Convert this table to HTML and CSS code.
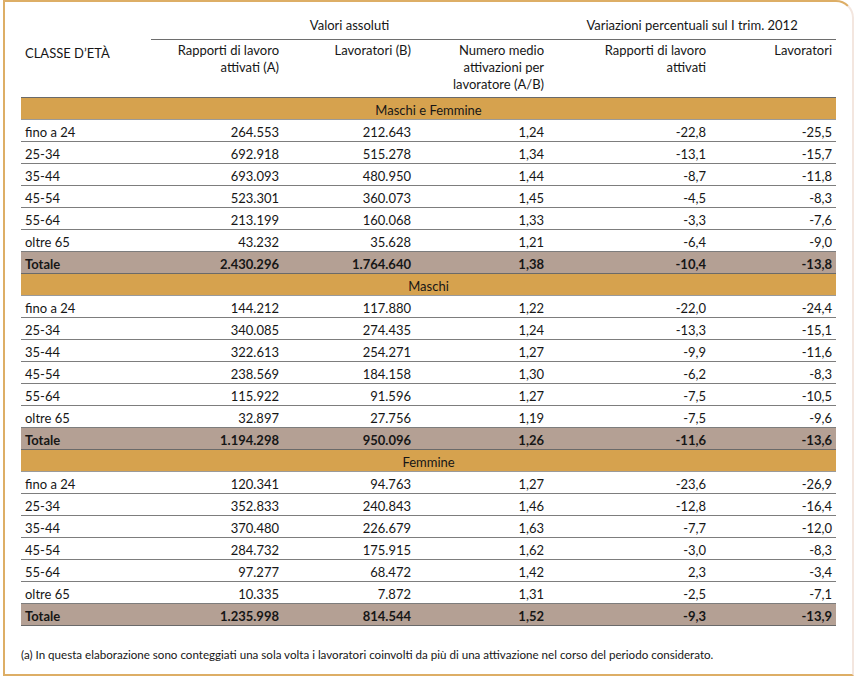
FILE: index.html
```html
<!DOCTYPE html>
<html lang="it">
<head>
<meta charset="utf-8">
<link rel="stylesheet" href="styles.css">
</head>
<body>
<div class="frame">
<table class="data">
<colgroup>
<col class="c1"><col class="c2"><col class="c3"><col class="c4"><col class="c5"><col class="c6">
</colgroup>
<thead>
<tr class="grp">
<th rowspan="2" class="age">CLASSE D’ETÀ</th>
<th colspan="3" class="g">Valori assoluti</th>
<th colspan="2" class="g">Variazioni percentuali sul I trim. 2012</th>
</tr>
<tr class="sub">
<th>Rapporti di lavoro<br>attivati (A)</th>
<th>Lavoratori (B)</th>
<th>Numero medio<br>attivazioni per<br>lavoratore (A/B)</th>
<th>Rapporti di lavoro<br>attivati</th>
<th>Lavoratori</th>
</tr>
</thead>
<tbody>
<tr class="band"><td colspan="6">Maschi e Femmine</td></tr>
<tr><td>fino a 24</td><td>264.553</td><td>212.643</td><td>1,24</td><td>-22,8</td><td>-25,5</td></tr>
<tr><td>25-34</td><td>692.918</td><td>515.278</td><td>1,34</td><td>-13,1</td><td>-15,7</td></tr>
<tr><td>35-44</td><td>693.093</td><td>480.950</td><td>1,44</td><td>-8,7</td><td>-11,8</td></tr>
<tr><td>45-54</td><td>523.301</td><td>360.073</td><td>1,45</td><td>-4,5</td><td>-8,3</td></tr>
<tr><td>55-64</td><td>213.199</td><td>160.068</td><td>1,33</td><td>-3,3</td><td>-7,6</td></tr>
<tr><td>oltre 65</td><td>43.232</td><td>35.628</td><td>1,21</td><td>-6,4</td><td>-9,0</td></tr>
<tr class="tot"><td>Totale</td><td>2.430.296</td><td>1.764.640</td><td>1,38</td><td>-10,4</td><td>-13,8</td></tr>
<tr class="band"><td colspan="6">Maschi</td></tr>
<tr><td>fino a 24</td><td>144.212</td><td>117.880</td><td>1,22</td><td>-22,0</td><td>-24,4</td></tr>
<tr><td>25-34</td><td>340.085</td><td>274.435</td><td>1,24</td><td>-13,3</td><td>-15,1</td></tr>
<tr><td>35-44</td><td>322.613</td><td>254.271</td><td>1,27</td><td>-9,9</td><td>-11,6</td></tr>
<tr><td>45-54</td><td>238.569</td><td>184.158</td><td>1,30</td><td>-6,2</td><td>-8,3</td></tr>
<tr><td>55-64</td><td>115.922</td><td>91.596</td><td>1,27</td><td>-7,5</td><td>-10,5</td></tr>
<tr><td>oltre 65</td><td>32.897</td><td>27.756</td><td>1,19</td><td>-7,5</td><td>-9,6</td></tr>
<tr class="tot"><td>Totale</td><td>1.194.298</td><td>950.096</td><td>1,26</td><td>-11,6</td><td>-13,6</td></tr>
<tr class="band"><td colspan="6">Femmine</td></tr>
<tr><td>fino a 24</td><td>120.341</td><td>94.763</td><td>1,27</td><td>-23,6</td><td>-26,9</td></tr>
<tr><td>25-34</td><td>352.833</td><td>240.843</td><td>1,46</td><td>-12,8</td><td>-16,4</td></tr>
<tr><td>35-44</td><td>370.480</td><td>226.679</td><td>1,63</td><td>-7,7</td><td>-12,0</td></tr>
<tr><td>45-54</td><td>284.732</td><td>175.915</td><td>1,62</td><td>-3,0</td><td>-8,3</td></tr>
<tr><td>55-64</td><td>97.277</td><td>68.472</td><td>1,42</td><td>2,3</td><td>-3,4</td></tr>
<tr><td>oltre 65</td><td>10.335</td><td>7.872</td><td>1,31</td><td>-2,5</td><td>-7,1</td></tr>
<tr class="tot"><td>Totale</td><td>1.235.998</td><td>814.544</td><td>1,52</td><td>-9,3</td><td>-13,9</td></tr>
</tbody>
</table>
<p class="note">(a) In questa elaborazione sono conteggiati una sola volta i lavoratori coinvolti da più di una attivazione nel corso del periodo considerato.</p>
</div>
</body>
</html>
```

FILE: styles.css
```css
html, body {
  margin: 0;
  padding: 0;
  background: #ffffff;
}
body {
  font-family: "Lato", "Open Sans", sans-serif;
  font-size: 13px;
  color: #161616;
}
.frame {
  box-sizing: border-box;
  margin-left: 3px;
  width: 851px;
  height: 676px;
  border: 2px solid #ddae66;
  border-right-color: #f3e6df;
  border-top-right-radius: 18px;
  padding: 0 15px 0 16px;
  display: flex;
  flex-direction: column;
}
.data {
  border-collapse: collapse;
  table-layout: fixed;
  width: 815px;
}
.c1 { width: 130px; }
.c2 { width: 132px; }
.c3 { width: 132px; }
.c4 { width: 133px; }
.c5 { width: 162px; }
.c6 { width: 126px; }
th {
  font-weight: normal;
  line-height: 17px;
  vertical-align: top;
}
.grp .g {
  text-align: center;
  padding: 15px 0 5px;
  border-bottom: 1px solid #6e6e6e;
}
.grp .age {
  text-align: left;
  padding: 43px 4px 0;
}
.sub th {
  text-align: right;
  padding: 2px 4px 4px;
}
td {
  height: 18px;
  padding: 3px 4px 0;
  text-align: right;
  line-height: 17px;
  border-bottom: 1px solid #7d7d7d;
  white-space: nowrap;
}
td:first-child {
  text-align: left;
}
.band td {
  background: #d6a24e;
  text-align: center;
  border-top: 1px solid #6a6a6a;
  border-bottom: 1px solid #9a9a9a;
}
.tot td {
  background: #b4a094;
  font-weight: bold;
  border-top: 1px solid #6a6a6a;
  border-bottom: 1px solid #6a6a6a;
}
.note {
  margin: 21px 0 0;
  font-size: 11.6px;
  line-height: 16px;
}
```
